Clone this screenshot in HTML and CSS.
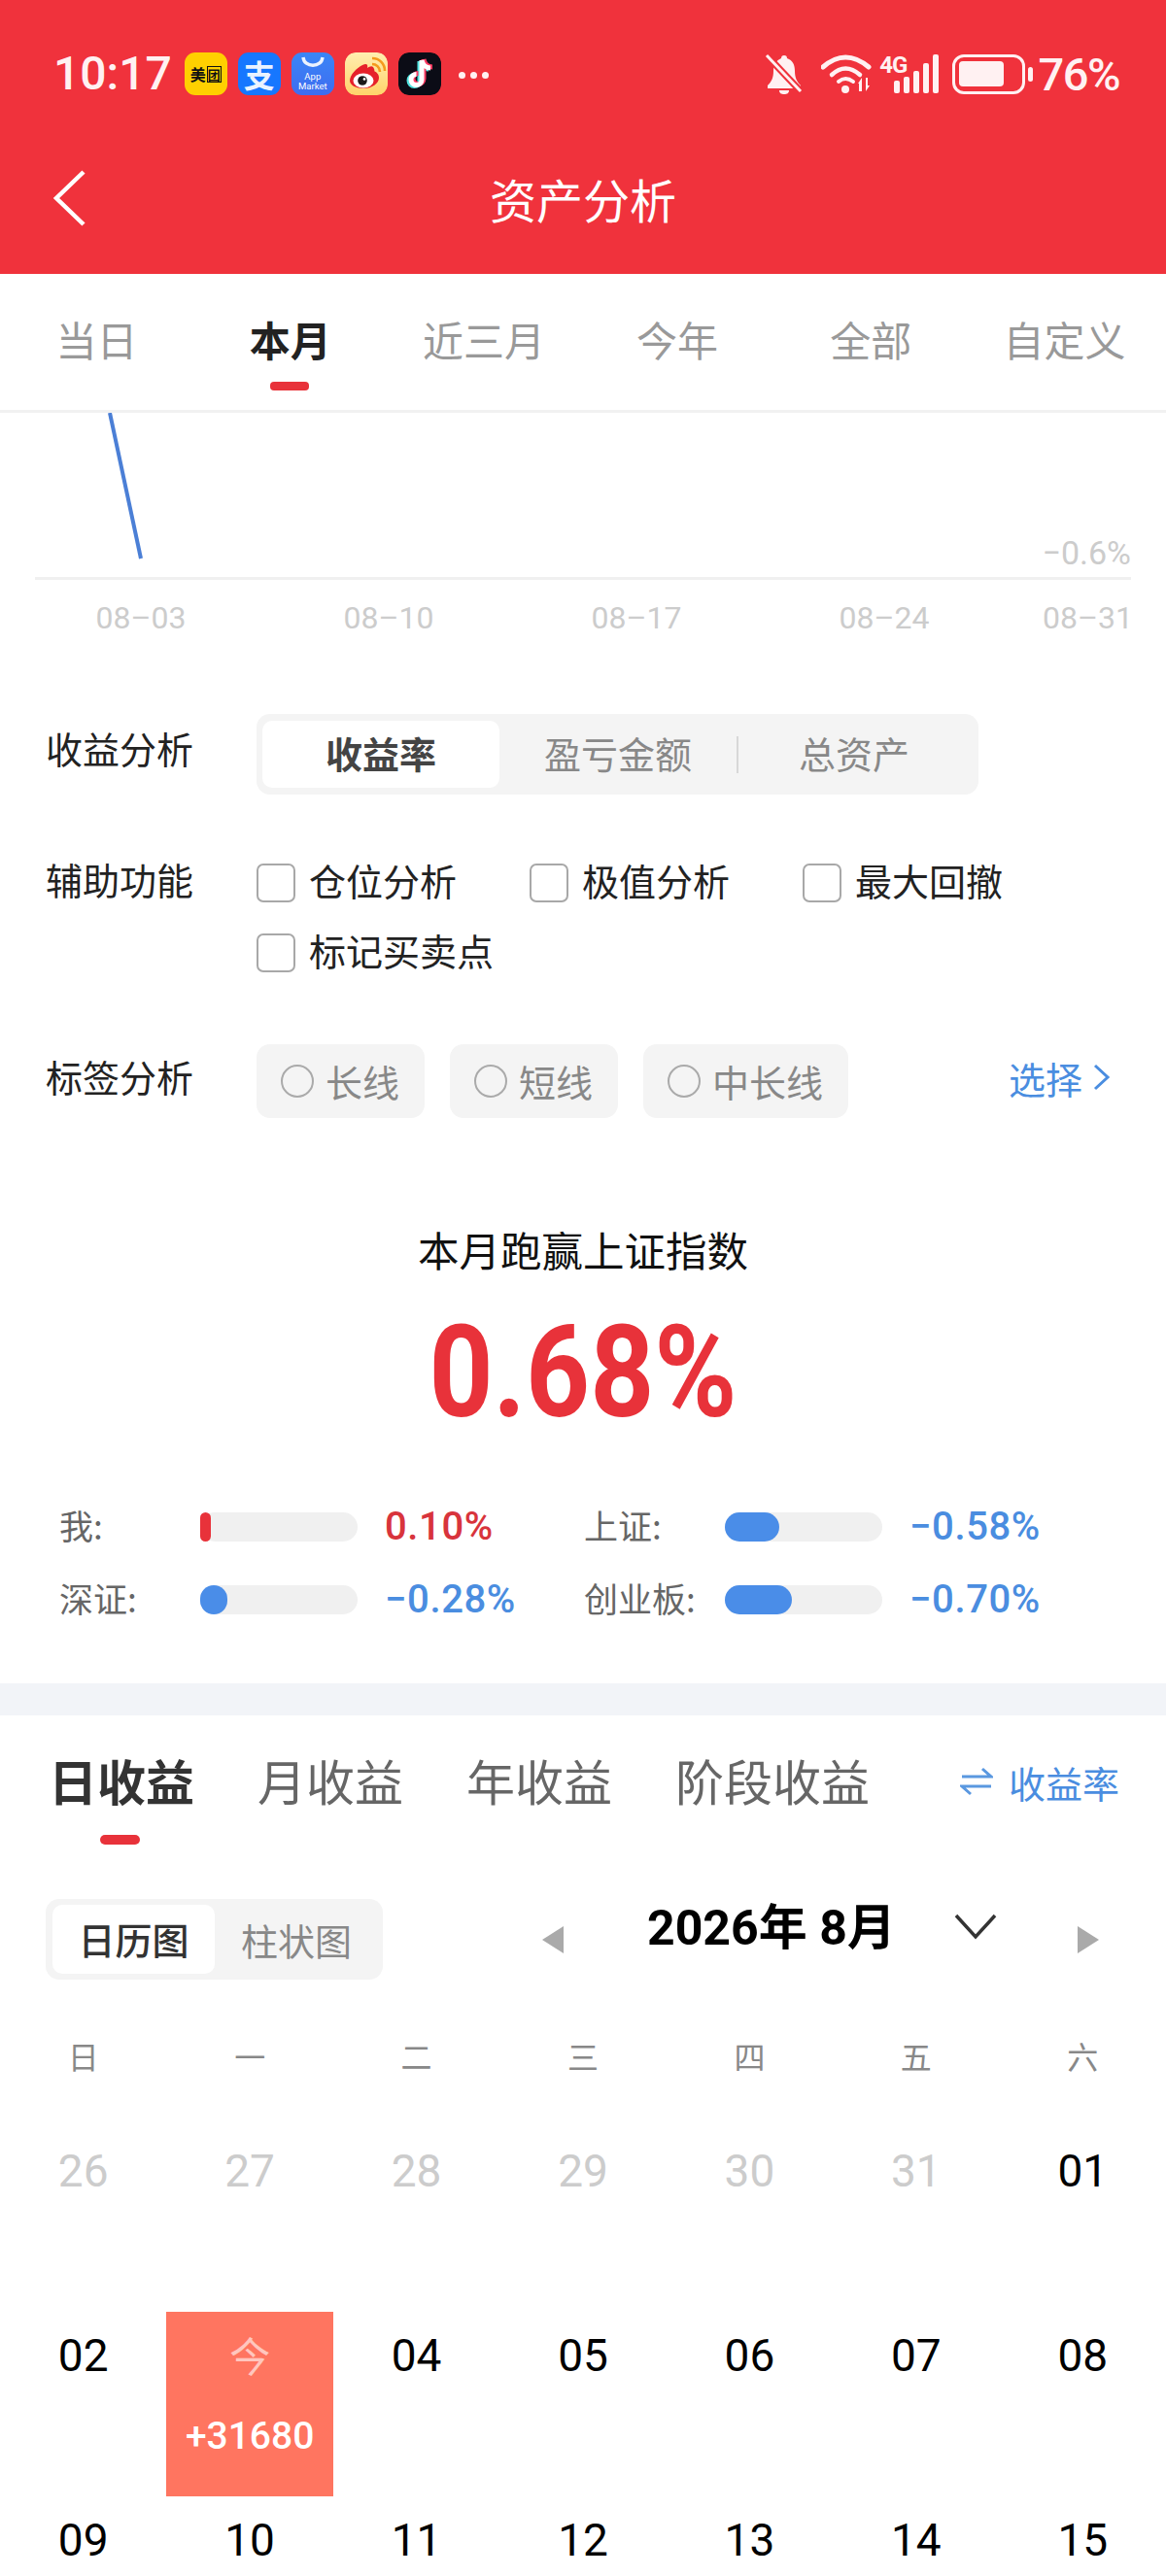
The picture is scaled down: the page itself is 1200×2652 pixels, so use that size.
FILE: index.html
```html
<!DOCTYPE html>
<html lang="zh-CN">
<head>
<meta charset="utf-8">
<title>资产分析</title>
<link rel="stylesheet" href="styles.css">
</head>
<body>
<div class="app">
  <header class="top">
    <div class="status">
      <span class="clock">10:17</span>
      <div class="notifs">
        <span class="app-icon meituan"><span>美</span><span class="boxed">团</span></span>
        <span class="app-icon alipay">支</span>
        <span class="app-icon market">
          <svg class="market-arc" viewBox="0 0 44 16"><path d="M12 5c1 11 19 11 20 0" fill="none" stroke="#fff" stroke-width="3.4" opacity=".9"/></svg>
          <span class="market-text">App<br>Market</span>
        </span>
        <svg class="app-icon" viewBox="0 0 44 44">
          <defs><linearGradient id="wb" x1="0" y1="0" x2="0" y2="1"><stop offset="0" stop-color="#ffeeb0"/><stop offset="1" stop-color="#ffd36a"/></linearGradient></defs>
          <rect width="44" height="44" rx="11" fill="url(#wb)"/>
          <path d="M30 17c-1-4-4-3-7-1 1-4-1-5-5-3-6 3-13 10-13 16 0 5 7 8 14 8 9 0 16-5 16-11 0-4-3-6-5-7 1-1 0-1 0-2z" fill="#e6212a"/>
          <ellipse cx="19" cy="29" rx="10.5" ry="7.5" fill="#fff"/>
          <circle cx="18" cy="29" r="4.8" fill="#1a1a1a"/>
          <circle cx="20" cy="27.400" r="1.300" fill="#fff"/>
          <path d="M28 12c4 0 8 3 8 8M28 6c8 0 13 6 13 13" fill="none" stroke="#f59a1c" stroke-width="2.600"/>
        </svg>
        <svg class="app-icon" viewBox="0 0 44 44">
          <rect width="44" height="44" rx="11" fill="#0b0c16"/>
          <g fill="none" stroke-width="5">
            <path d="M22 9v20a5.500 5.500 0 1 1-5.500-5.500M22 9c1 5 5 8 9 8" stroke="#4fe3e0"/>
            <path d="M26 7v20a5.500 5.500 0 1 1-5.500-5.500M26 7c1 5 5 8 9 8" stroke="#ff3b63"/>
            <path d="M24 8v20a5.500 5.500 0 1 1-5.500-5.500M24 8c1 5 5 8 9 8" stroke="#fff"/>
          </g>
        </svg>
        <span class="more"><i></i><i></i><i></i></span>
      </div>
      <div class="sys">
        <svg class="ic-bell" viewBox="0 0 40 44">
          <path d="M20 3c2 0 3 1 3 3 6 2 8 7 8 13 0 7 2 11 6 15v3H3v-3c4-4 6-8 6-15 0-6 3-11 8-13 0-2 1-3 3-3z" fill="#fff1f2"/>
          <path d="M15 39h10c0 3-2 4-5 4s-5-1-5-4z" fill="#fff1f2"/>
          <path d="M2 3l35 37" stroke="#f0323c" stroke-width="7"/>
          <path d="M2 3l35 37" stroke="#fff1f2" stroke-width="3"/>
        </svg>
        <svg class="ic-wifi" viewBox="0 0 52 40">
          <g fill="none" stroke="#fff1f2" stroke-linecap="round">
            <path d="M2 13Q25-7 49 13" stroke-width="5"/>
            <path d="M11 21Q25 8 40 21" stroke-width="4.500"/>
            <path d="M18 28Q25 22 33 28" stroke-width="4"/>
          </g>
          <circle cx="25" cy="36" r="4" fill="#fff1f2"/>
          <path d="M38 30l4-6v14h-3V30zM45 24h3v8h2l-4 6V24z" fill="#fff1f2"/>
        </svg>
        <span class="net">4G</span>
        <span class="bars"><i class="b1"></i><i class="b2"></i><i class="b3"></i><i class="b4"></i><i class="b5"></i></span>
        <span class="battery"><span class="battery-fill"></span></span>
        <span class="battery-tip"></span>
        <span class="pct">76%</span>
      </div>
    </div>
    <div class="nav">
      <svg class="back" viewBox="0 0 36 60"><path d="M33 3L5 30l28 27" fill="none" stroke="#fff" stroke-width="4.500"/></svg>
      <h1 class="title">资产分析</h1>
    </div>
  </header>

  <nav class="range">
    <div class="range-tab"><span>当日</span></div>
    <div class="range-tab on"><span>本月</span><i class="mark"></i></div>
    <div class="range-tab"><span>近三月</span></div>
    <div class="range-tab"><span>今年</span></div>
    <div class="range-tab"><span>全部</span></div>
    <div class="range-tab"><span>自定义</span></div>
  </nav>

  <svg class="chart" viewBox="0 0 1200 250">
    <path class="chart-line" d="M113 0L145 150"/>
    <path class="chart-axis" d="M36 170.500H1164"/>
    <text class="chart-text chart-edge" x="1164" y="156" text-anchor="end">−0.6%</text>
    <text class="chart-text" x="145" y="222" text-anchor="middle">08–03</text>
    <text class="chart-text" x="400" y="222" text-anchor="middle">08–10</text>
    <text class="chart-text" x="655" y="222" text-anchor="middle">08–17</text>
    <text class="chart-text" x="910" y="222" text-anchor="middle">08–24</text>
    <text class="chart-text" x="1166" y="222" text-anchor="end">08–31</text>
  </svg>

  <section class="options">
    <div class="opt-row">
      <div class="opt-label">收益分析</div>
      <div class="seg">
        <span class="seg-item on">收益率</span>
        <span class="seg-item money">盈亏金额</span>
        <i class="seg-rule"></i>
        <span class="seg-item assets">总资产</span>
      </div>
    </div>
    <div class="opt-row checks-row">
      <div class="opt-label">辅助功能</div>
      <div class="checks">
        <label class="check"><i class="box"></i>仓位分析</label>
        <label class="check"><i class="box"></i>极值分析</label>
        <label class="check"><i class="box"></i>最大回撤</label>
        <label class="check"><i class="box"></i>标记买卖点</label>
      </div>
    </div>
    <div class="opt-row tags-row">
      <div class="opt-label">标签分析</div>
      <div class="chips">
        <span class="chip"><i class="dot"></i>长线</span>
        <span class="chip"><i class="dot"></i>短线</span>
        <span class="chip"><i class="dot"></i>中长线</span>
      </div>
      <span class="pick">选择<svg class="pick-arrow" viewBox="0 0 20 30"><path d="M3 3l13 12L3 27" fill="none" stroke="#4a8de0" stroke-width="3"/></svg></span>
    </div>
  </section>

  <section class="beat">
    <div class="beat-title">本月跑赢上证指数</div>
    <div class="beat-value">0.68%</div>
    <div class="stats">
      <div class="stat"><span class="stat-name">我:</span><span class="track"><i class="fill up" style="width:11px"></i></span><span class="stat-val up-text">0.10%</span></div>
      <div class="stat"><span class="stat-name">上证:</span><span class="track"><i class="fill down" style="width:56px"></i></span><span class="stat-val down-text">−0.58%</span></div>
      <div class="stat"><span class="stat-name">深证:</span><span class="track"><i class="fill down" style="width:28px"></i></span><span class="stat-val down-text">−0.28%</span></div>
      <div class="stat"><span class="stat-name">创业板:</span><span class="track"><i class="fill down" style="width:69px"></i></span><span class="stat-val down-text">−0.70%</span></div>
    </div>
  </section>

  <div class="band"></div>

  <section class="earn">
    <div class="earn-tabs">
      <div class="earn-tab on"><span>日收益</span><i class="mark"></i></div>
      <div class="earn-tab"><span>月收益</span></div>
      <div class="earn-tab"><span>年收益</span></div>
      <div class="earn-tab"><span>阶段收益</span></div>
      <div class="rate">
        <svg class="rate-icon" viewBox="0 0 34 32"><path d="M2 11H32L23 3M32 21H2L11 29" fill="none" stroke="#5a98e0" stroke-width="3"/></svg>
        收益率
      </div>
    </div>

    <div class="cal-bar">
      <div class="view">
        <span class="view-item on">日历图</span>
        <span class="view-item">柱状图</span>
      </div>
      <i class="tri tri-prev"></i>
      <div class="month">2026年 8月</div>
      <svg class="month-arrow" viewBox="0 0 44 28"><path d="M2 3l20 22L42 3" fill="none" stroke="#333" stroke-width="3.500"/></svg>
      <i class="tri tri-next"></i>
    </div>

    <div class="week">
      <span>日</span><span>一</span><span>二</span><span>三</span><span>四</span><span>五</span><span>六</span>
    </div>

    <div class="days">
      <div class="day past">26</div><div class="day past">27</div><div class="day past">28</div><div class="day past">29</div><div class="day past">30</div><div class="day past">31</div><div class="day">01</div>
      <div class="day">02</div>
      <div class="day today"><span class="today-mark">今</span><span class="today-gain">+31680</span></div>
      <div class="day">04</div><div class="day">05</div><div class="day">06</div><div class="day">07</div><div class="day">08</div>
      <div class="day">09</div><div class="day">10</div><div class="day">11</div><div class="day">12</div><div class="day">13</div><div class="day">14</div><div class="day">15</div>
    </div>
  </section>
</div>
</body>
</html>
```
FILE: styles.css
```css
* { box-sizing: border-box; }
html, body { margin: 0; padding: 0; background: #fff; }
body { font-family: "Noto Sans CJK SC", "Noto Sans", sans-serif; color: #222; }
i { display: block; font-style: normal; }

.app { width: 1200px; height: 2652px; overflow: hidden; background: #fff; }

/* Red header: status bar and title */
.top { height: 282px; background: #f0323c; color: #fff; }
.status { height: 126px; padding: 26px 48px 0 55px; display: flex; align-items: center; }
.clock { font: 500 48px/1 Roboto, sans-serif; color: #fff1f2; }
.notifs { display: flex; align-items: center; gap: 11px; margin-left: 13px; }
.app-icon { width: 44px; height: 44px; border-radius: 11px; display: flex; align-items: center; justify-content: center; flex: none; }
.meituan { background: #ffd000; color: #111; font: 700 16px/1 "Noto Sans CJK SC", sans-serif; gap: 1px; }
.boxed { border: 1.5px solid #111; line-height: 15px; font-size: 13px; }
.alipay { background: #1677ff; color: #eaf3ff; font: 700 32px/44px "Noto Sans CJK SC", sans-serif; }
.market { background: linear-gradient(#3a86f7, #3e6cf0); flex-direction: column; justify-content: flex-start; color: #fff; }
.market-arc { width: 44px; height: 16px; display: block; flex: none; }
.market-text { font: 400 9.500px/10px Roboto, sans-serif; text-align: center; margin-top: 4px; }
.more { display: flex; gap: 5px; margin-left: 7px; padding-top: 2px; }
.more i { width: 7px; height: 7px; border-radius: 50%; background: #fff1f2; }

.sys { margin-left: auto; display: flex; align-items: center; color: #fff1f2; }
.ic-bell { width: 40px; height: 44px; }
.ic-wifi { width: 52px; height: 40px; margin-left: 18px; }
.net { font: 700 24px/1 Roboto, sans-serif; letter-spacing: -1px; align-self: flex-start; margin: 2px -13px 0 8px; }
.bars { display: flex; align-items: flex-end; gap: 4px; height: 40px; }
.bars i { width: 6px; background: #fff1f2; border-radius: 2px; }
.b1 { height: 13px; }
.b2 { height: 17px; }
.b3 { height: 23px; }
.b4 { height: 31px; }
.b5 { height: 40px; }
.battery { width: 75px; height: 41px; margin-left: 14px; border: 3.500px solid #fff1f2; border-radius: 12px; padding: 4px; }
.battery-fill { display: block; width: 46px; height: 26px; background: #fff1f2; border-radius: 4px; }
.battery-tip { width: 5px; height: 15px; background: #fff1f2; border-radius: 3px; margin-left: 3px; }
.pct { font: 500 47px/1 Roboto, sans-serif; letter-spacing: -1.500px; margin-left: 5px; }

.nav { height: 156px; position: relative; display: flex; align-items: center; justify-content: center; }
.back { width: 36px; height: 60px; position: absolute; left: 53px; top: 48px; }
.title { margin: 0; font-size: 48px; font-weight: 400; line-height: 60px; color: #fff; }

/* Range tabs */
.range { height: 143px; border-bottom: 3px solid #f1f1f1; display: grid; grid-template-columns: repeat(6, 1fr); padding: 39px 5px 0 0; }
.range-tab { display: flex; flex-direction: column; align-items: center; font-size: 42px; line-height: 56px; color: #999; }
.range-tab.on { color: #222; font-weight: 700; }
.range-tab .mark { width: 40px; height: 9px; margin: 16px 1px 0 0; border-radius: 4px; background: #e8323a; }

/* Trend chart */
.chart { display: block; width: 1200px; height: 250px; }
.chart-line { stroke: #4b7fd6; stroke-width: 4; fill: none; }
.chart-axis { stroke: #f0f0f0; stroke-width: 3; fill: none; }
.chart-text { font: 400 32px Roboto, sans-serif; fill: #ccc; }
.chart-edge { font-size: 34px; }

/* Option rows */
.options { padding: 60px 0 0 47px; }
.opt-row { display: flex; align-items: flex-start; }
.opt-label { width: 217px; flex: none; font-size: 38px; line-height: 56px; color: #222; }
.opt-row:first-child .opt-label { margin-top: 7px; }
.seg { width: 743px; height: 83px; background: #f4f4f4; border-radius: 14px; padding: 7px 6px; display: flex; align-items: center; }
.seg-item { font-size: 38px; line-height: 56px; color: #888; margin-bottom: 3px; }
.seg-item.on { width: 244px; height: 69px; line-height: 65px; margin-bottom: 0; background: #fff; border-radius: 10px; text-align: center; color: #444; font-weight: 700; }
.seg-item.money { margin-left: 46px; }
.seg-rule { width: 2px; height: 38px; background: #d8d8d8; margin-left: 46px; }
.seg-item.assets { margin-left: 62px; }

.checks-row { margin-top: 71px; }
.checks-row .opt-label { margin-top: -12px; }
.checks { display: grid; grid-template-columns: repeat(3, 281px); row-gap: 32px; }
.check { display: flex; align-items: flex-start; gap: 14px; height: 40px; font-size: 38px; line-height: 34px; color: #222; }
.box { width: 40px; height: 40px; border: 2.500px solid #a8a8a8; border-radius: 7px; flex: none; }

.tags-row { margin-top: 74px; align-items: center; padding-right: 56px; }
.tags-row .opt-label { margin-bottom: 10px; }
.chips { display: flex; gap: 26px; }
.chip { height: 76px; padding: 0 26px 2px 25px; display: flex; align-items: center; gap: 12px; background: #f4f4f4; border-radius: 14px; font-size: 38px; color: #888; }
.dot { width: 34px; height: 34px; border: 2.500px solid #aaa; border-radius: 50%; margin-top: 2px; }
.pick { margin: 0 0 8px auto; display: flex; align-items: center; gap: 10px; font-size: 38px; color: #4a8de0; }
.pick-arrow { width: 20px; height: 30px; }

/* Index comparison */
.beat { padding-top: 105px; }
.beat-title { text-align: center; font-size: 42.500px; line-height: 60px; color: #111; }
.beat-value { margin-top: 22px; text-align: center; font: 700 131px/150px Roboto, sans-serif; color: #e8323a; transform: scaleX(.88); }
.stats { margin-top: 69px; padding: 0 0 71px 61px; display: grid; grid-template-columns: 540px 1fr; row-gap: 45px; }
.stat { display: flex; align-items: center; height: 30px; }
.stat-name { width: 145px; flex: none; font-size: 35px; color: #666; margin-bottom: 6px; }
.track { width: 162px; height: 30px; background: #f0f0f0; border-radius: 15px; flex: none; }
.fill { height: 30px; border-radius: 15px; }
.fill.up { background: #e8323a; border-radius: 6px; }
.fill.down { background: #4a8de8; }
.stat-val { margin-left: 28px; font: 500 40px/1 Roboto, sans-serif; letter-spacing: .6px; }
.up-text { color: #d8343c; }
.down-text { color: #4a8de0; }

.band { height: 33px; background: #f2f4f8; }

/* Earnings tabs */
.earn { padding-top: 36px; }
.earn-tabs { display: flex; align-items: flex-start; gap: 65px; padding: 0 48px 0 50px; height: 97px; }
.earn-tab { display: flex; flex-direction: column; align-items: center; font-size: 50px; line-height: 60px; color: #666; }
.earn-tab.on { color: #333; font-weight: 700; }
.earn-tab .mark { width: 41px; height: 10px; margin: 27px 4px 0 0; border-radius: 5px; background: #e8323a; }
.rate { margin-left: auto; display: flex; align-items: center; gap: 16px; height: 64px; font-size: 38px; color: #4a8de0; }
.rate-icon { width: 34px; height: 32px; }

/* Calendar toolbar */
.cal-bar { margin-top: 56px; padding-left: 47px; display: flex; align-items: center; height: 83px; }
.view { width: 347px; height: 83px; background: #f4f4f4; border-radius: 14px; padding: 7px; display: flex; align-items: center; }
.view-item { font-size: 38px; color: #888; margin-left: 27px; }
.view-item.on { width: 167px; height: 71px; margin-left: 0; line-height: 69px; text-align: center; background: #fff; border-radius: 10px; color: #333; font-weight: 500; }
.tri { width: 0; height: 0; border-style: solid; border-color: transparent; }
.tri-prev { margin-left: 164px; border-width: 14px 22px 14px 0; border-right-color: #aaa; }
.tri-next { margin-left: 83px; border-width: 14px 0 14px 22px; border-left-color: #aaa; }
.month { margin: -24px 0 0 86px; width: 255px; font: 700 50px/60px Roboto, "Noto Sans CJK SC", sans-serif; color: #000; white-space: nowrap; }
.month-arrow { width: 44px; height: 28px; margin: -28px 0 0 61px; }

/* Calendar grid */
.week { margin-top: 56px; display: grid; grid-template-columns: repeat(7, 1fr); text-align: center; font-size: 32px; line-height: 44px; color: #888; }
.days { margin-top: 52px; display: grid; grid-template-columns: repeat(7, 1fr); grid-auto-rows: 190px; }
.day { padding-top: 15px; text-align: center; font: 400 46px/60px Roboto, sans-serif; color: #000; }
.day.past { color: #ccc; }
.day.today { padding-top: 14px; background: #ff7560; display: flex; flex-direction: column; align-items: center; }
.today-mark { font: 400 42px/60px "Noto Sans CJK SC", sans-serif; color: rgba(255, 255, 255, .6); }
.today-gain { margin-top: 24px; font: 500 39px/60px Roboto, sans-serif; color: #fff; }
```
